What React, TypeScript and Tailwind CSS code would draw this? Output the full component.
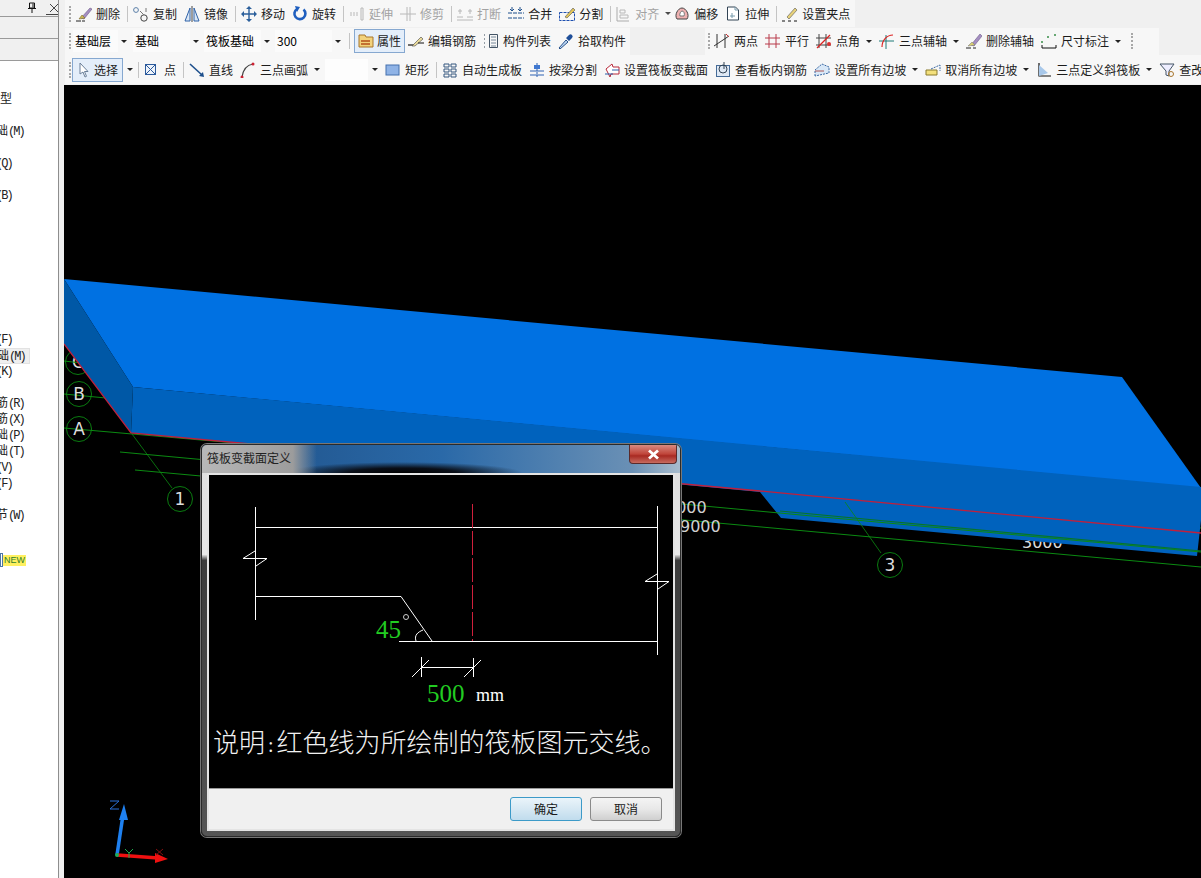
import React from "react";

const S = ({ children }: { children: React.ReactNode }) => (
  <svg width="16" height="16" viewBox="0 0 16 16" fill="none" className="shrink-0 block">{children}</svg>
);
const I: Record<string, React.ReactNode> = {
  del: <S><path d="M0 15h5M6 15h3" stroke="#222" /><path d="M5 12 L14 2 L16 3 L8 13Z" fill="#a58fc2" stroke="#6d5a8a" strokeWidth=".6" /><path d="M3 13 L6 9 L9 12 Z" fill="#c9b65a" stroke="#7c6d2b" strokeWidth=".6" /></S>,
  copy: <S><circle cx="3" cy="4" r="2.4" stroke="#5b7fa8" /><circle cx="11" cy="12" r="3.2" stroke="#444" /><path d="M7 5l4 4M13 2v4" stroke="#777" /></S>,
  mirror: <S><path d="M8 0v16" stroke="#444" /><path d="M6 2L1 15h5Z M10 2l5 13h-5Z" stroke="#2f62a8" fill="#dbe7f5" /></S>,
  move: <S><path d="M8 1v14M1 8h14" stroke="#2b5f9b" strokeWidth="1.4" /><path d="M8 0l3 3H5Z M8 16l3-3H5Z M0 8l3-3v6Z M16 8l-3-3v6Z" fill="#2b5f9b" /></S>,
  rotate: <S><path d="M11.500 3.500a5.500 5.500 0 1 1-6.500-.5" stroke="#1f5fbf" strokeWidth="2.600" /><path d="M3 0l5 1-3 5Z" fill="#1f5fbf" /></S>,
  extend: <S><path d="M1 7h8M1 9h8" stroke="#aaa" strokeDasharray="2 1" /><path d="M12 2h2v12h-2Z" stroke="#aaa" /></S>,
  trim: <S><path d="M0 8h16M7 1v14M10 1v14" stroke="#aaa" /></S>,
  brk: <S><path d="M0 11h6M10 11h6M0 14h16" stroke="#aaa" /><path d="M3 3v5M13 3v5M1 5h4M11 5h4" stroke="#aaa" /></S>,
  merge: <S><path d="M0 7h16M0 12h16" stroke="#1d4f8c" strokeDasharray="4 1" /><path d="M4 1v4M12 1v4M2 3l2 2 2-2M10 3l2 2 2-2" stroke="#1d4f8c" /></S>,
  split: <S><rect x=".5" y="6.500" width="15" height="8" stroke="#1d4fb0" strokeDasharray="3 1" /><path d="M6 11 L14 2 L16 4 L8 12Z" fill="#e2c55a" stroke="#555" strokeWidth=".6" /></S>,
  align: <S><path d="M2 1v14M2 15h12" stroke="#999" /><path d="M5 4h5v3H5Z M5 9h8v3H5Z" stroke="#aaa" /></S>,
  offset: <S><path d="M3 13 C0 9 4 2 8 2 C12 2 16 9 13 13 Z" fill="#eeb1b1" stroke="#444" /><path d="M6 10 C5 8 7 5 8 5 C10 5 11 8 10 10Z" fill="#fff" stroke="#777" /></S>,
  stretch: <S><path d="M2.500 1h8l3 3v10h-11Z" fill="#fff" stroke="#345" /><path d="M10 1v3h3M7 7v5M5 10h5" stroke="#79a" /></S>,
  grip: <S><path d="M0 15h3M6 15h3M12 15h3" stroke="#111" /><path d="M5 11 L13 2 L15 4 L7 13Z" fill="#e8d27a" stroke="#555" strokeWidth=".6" /></S>,
  prop: <S><path d="M1 2h6l1 2h7v10H1Z" fill="#f2d27c" stroke="#a8762c" /><path d="M3 8h9M3 11h9" stroke="#b4501c" strokeWidth="1.500" /></S>,
  rebar: <S><path d="M0 12h7" stroke="#111" strokeWidth="1.200" /><path d="M4 13 L13 4 L15 6 L7 13Z" fill="#eadb9b" stroke="#444" strokeWidth=".6" /><path d="M10 10h6" stroke="#111" /></S>,
  list: <S><path d="M6.500 1.500h8v13h-8Z" stroke="#456" /><path d="M8 4h5M8 7h5M8 10h5M8 13h5" stroke="#789" /><path d="M1 2h2M1 6h2M1 10h2M1 14h2" stroke="#345" strokeDasharray="1 1" /></S>,
  pick: <S><path d="M1 15l7-8 2 2-8 7Z" fill="#bcd6f2" stroke="#27518a" /><path d="M8 5l3-3a2 2 0 0 1 3 3l-3 3Z" fill="#1f4f99" /></S>,
  two: <S><path d="M3 1v14M11 1v14" stroke="#333" /><path d="M0 13L15 3" stroke="#333" /><path d="M12 1l3 3" stroke="#c33" /></S>,
  par: <S><path d="M4 1v14M11 1v14M0 5h15M0 11h15" stroke="#b83a4a" /></S>,
  angle: <S><path d="M3 1v14M10 1v14M0 5h15M0 12h15" stroke="#444" /><path d="M1 15L14 2" stroke="#d22" strokeWidth="1.200" /><circle cx="13" cy="11" r="2" fill="#d33" /></S>,
  arc3: <S><path d="M0 8h15M7 2v14" stroke="#1f7a78" /><path d="M3 14C3 7 8 2 14 2" stroke="#d22" strokeWidth="1.200" /></S>,
  delAxis: <S><path d="M0 15h5M7 15h3" stroke="#222" /><path d="M5 12 L14 1 L16 3 L8 13Z" fill="#a58fc2" stroke="#6d5a8a" strokeWidth=".6" /><path d="M2 13L6 9l3 3Z" fill="#d8ce72" stroke="#777" strokeWidth=".5" /></S>,
  dim: <S><path d="M1 15h14M1 12v3M15 12v3" stroke="#111" /><path d="M1 8v2M7 3v2M14 1v2" stroke="#3a8f4a" strokeWidth="1.500" /></S>,
  sel: <S><path d="M4 1v11l3-2 2 5 1.500-.7L8.500 9.500H12Z" fill="#fff" stroke="#6a7f99" /></S>,
  pt: <S><rect x="1.500" y="2.500" width="10" height="10" stroke="#2b5a9c" fill="#eef3fa" /><path d="M1.500 2.500l10 10M11.500 2.500l-10 10" stroke="#2b5a9c" /></S>,
  line: <S><path d="M1 2L13 13" stroke="#1d4f8c" strokeWidth="1.600" /><path d="M15 15l-5-1 4-4Z" fill="#1d4f8c" /></S>,
  arc: <S><path d="M2 15C3 8 7 3 13 2" stroke="#444" strokeWidth="1.200" /><circle cx="2" cy="15" r="1.500" fill="#c23" /><circle cx="13" cy="2" r="1.500" fill="#c23" /></S>,
  rect: <S><rect x="1" y="3" width="13" height="10" fill="#8fb3e6" stroke="#4470ad" /></S>,
  auto: <S><path d="M2 2h5v3H2Z M9 2h5v3H9Z M2 7h5v3H2Z M9 7h5v3H9Z M2 12h5v3H2Z M9 12h5v3H9Z" stroke="#34567f" /></S>,
  beam: <S><path d="M1 9h14M1 13h14" stroke="#2e63b3" strokeWidth="1.200" /><path d="M8 1v14" stroke="#2e63b3" strokeDasharray="2 1" /><rect x="5" y="3" width="6" height="4" fill="#3f78d0" /></S>,
  section: <S><path d="M2 7l6-5 1 3h6v7H7l-1 3Z" stroke="#b8283a" fill="#fff" /><path d="M1 12h8" stroke="#2a5ea8" /><path d="M8 8h7" stroke="#2a5ea8" /></S>,
  view: <S><rect x="1.500" y="3.500" width="13" height="11" fill="#dfe9f5" stroke="#456b97" /><circle cx="8" cy="7" r="4" stroke="#345" /><path d="M9 0v7" stroke="#345" /></S>,
  slope: <S><path d="M1 14V8L8 2l7 3v6Z" fill="#d9e8f7" stroke="#3a69a4" strokeDasharray="2 1" /><path d="M1 9h9" stroke="#a55" /></S>,
  noslope: <S><path d="M1 8h11v5H1Z" fill="#f3e07c" stroke="#8a7a2c" /><path d="M6 7l9-4v6" stroke="#3a69a4" strokeDasharray="2 1" /></S>,
  plane: <S><path d="M3 1v13h12" stroke="#111" strokeWidth="1.200" /><path d="M3 3l9 8-9 3Z" fill="#a8c8ea" /></S>,
  check: <S><path d="M1 2h14l-5 7v5l-3-1V9Z" stroke="#456" fill="#eef" /><circle cx="12" cy="12" r="2.500" stroke="#a8752c" /></S>,
};

const Tri = () => <span className="block border-x-[3px] border-t-[3px] border-x-transparent border-t-[#222]" />;
const Caret = ({ c = "ml-[1px]" }: { c?: string }) => <span className={`${c} w-[7px] flex justify-center shrink-0`}><Tri /></span>;
const Sep = ({ c = "" }: { c?: string }) => <span className={`block w-px h-[16px] bg-[#c4c4c4] shrink-0 -mr-[2px] ${c}`} />;
const Grip = ({ c = "" }: { c?: string }) => <span className={`block h-[16px] border-l-2 border-dotted border-[#a8a8a8] shrink-0 ${c}`} />;

function Tool({ i, t, off, caret, c = "" }: { i: string; t: string; off?: boolean; caret?: boolean; c?: string }) {
  return (
    <div className={`flex items-center shrink-0 gap-[4px] ${off ? "text-[#8e8e8e] opacity-80" : "text-[#1c1c1c]"} ${c}`}>
      {I[i]}
      <span className="whitespace-nowrap">{t}</span>
      {caret && <Caret />}
    </div>
  );
}

function Combo({ t, w }: { t: string; w: string }) {
  return (
    <div className="flex items-center h-[22px] shrink-0">
      <div className={`h-full bg-[#fbfbfb] pl-[2px] flex items-center ${w}`}>{t}</div>
      <div className="w-[12px] h-full flex justify-center items-center"><Tri /></div>
    </div>
  );
}

const list: [string, string, string][] = [
  ["", "型", "ml-0"], ["", "", ""], ["础", "(M)", "-ml-[4px]"], ["", "", ""], ["", "(Q)", "-ml-[4px]"], ["", "", ""], ["", "(B)", "-ml-[4px]"],
  ["", "", ""], ["", "", ""], ["", "", ""], ["", "", ""], ["", "", ""], ["", "", ""], ["", "", ""], ["", "", ""],
  ["", "(F)", "-ml-[4px]"], ["础", "(M)", "-ml-[4px]"], ["", "(K)", "-ml-[4px]"], ["", "", ""], ["筋", "(R)", "-ml-[4px]"], ["筋", "(X)", "-ml-[4px]"],
  ["础", "(P)", "-ml-[4px]"], ["础", "(T)", "-ml-[4px]"], ["", "(V)", "-ml-[4px]"], ["", "(F)", "-ml-[4px]"], ["", "", ""], ["节", "(W)", "-ml-[4px]"],
];

function Sidebar() {
  return (
    <aside className="w-[59px] shrink-0 bg-white border-r border-[#8e8e8e] flex flex-col overflow-hidden">
      <div className="h-[17px] bg-[#f0f0f0] border-b border-[#9a9a9a] flex items-center pl-[27px] gap-[9px]">
        <svg width="10" height="12" viewBox="0 0 10 12" fill="none" className="block shrink-0"><path d="M2.500 1h5v5h-5ZM1 6.500h8M5 7v4M6 1.500v4" stroke="#111" /></svg>
        <svg width="14" height="13" viewBox="0 0 14 13" fill="none" className="block shrink-0"><path d="M4 2l8 8M12 2l-8 8M0 12.500h14" stroke="#444" /></svg>
      </div>
      <div className="h-[22px] bg-[#f0f0f0] border-b border-[#9a9a9a]" />
      <div className="h-[22px] bg-[#f0f0f0] border-b border-[#9a9a9a]" />
      <div className="pt-[31px] flex flex-col text-[12px] font-['Liberation_Mono','Noto_Sans_CJK_SC',monospace] text-[#222]">
        {list.map(([cjk, lat, m], k) => (
          <div key={k} className={`h-[16px] leading-[16px] whitespace-nowrap ${k === 16 ? "bg-[#efefef] border border-[#e2e2e2] w-[34px]" : ""} ${m}`}>
            {cjk}<span className={lat === "型" ? "" : "tracking-[-2px]"}>{lat}</span>
          </div>
        ))}
        <div className="h-[29px]" />
        <div className="flex items-center h-[14px]">
          <span className="block w-[3px] h-[14px] border border-[#4d78a8]" />
          <span className="bg-[#fff060] text-[#2d7f2d] text-[9px] leading-[11px] font-['Liberation_Sans',sans-serif] px-px">NEW</span>
        </div>
      </div>
    </aside>
  );
}

function Toolbar() {
  return (
    <div className="h-[85px] shrink-0 bg-[#f0f0f0] pl-[1px] flex flex-col text-[12px] font-['Noto_Sans_CJK_SC','Liberation_Sans',sans-serif] overflow-hidden">
      <div className="h-[27px] flex items-center">
        <div className="h-[27px] w-[790px] bg-[#f7f7f7] flex items-center pl-[4px] gap-[7px]">
          <Grip />
          <Tool i="del" t="删除" c="-ml-[2px]" /><Sep />
          <Tool i="copy" t="复制" /><Tool i="mirror" t="镜像" /><Sep />
          <Tool i="move" t="移动" /><Tool i="rotate" t="旋转" /><Sep />
          <Tool i="extend" t="延伸" off /><Tool i="trim" t="修剪" off /><Sep />
          <Tool i="brk" t="打断" off /><Tool i="merge" t="合并" /><Tool i="split" t="分割" /><Sep />
          <Tool i="align" t="对齐" off caret c="-ml-[1px] -mr-[4px]" />
          <Tool i="offset" t="偏移" /><Tool i="stretch" t="拉伸" /><Sep />
          <Tool i="grip" t="设置夹点" />
        </div>
      </div>
      <div className="h-[28px] flex items-center">
        <div className="h-[27px] w-[565px] bg-[#f7f7f7] flex items-center pl-[4px] shrink-0">
          <Grip c="mr-[2px]" />
          <Combo t="基础层" w="w-[45px]" />
          <span className="w-[3px]" />
          <Combo t="基础" w="w-[57px]" />
          <span className="w-[2px]" />
          <Combo t="筏板基础" w="w-[57px]" />
          <span className="w-[2px]" />
          <Combo t="300" w="w-[57px]" />
          <Sep c="ml-[5px] mr-[4px]" />
          <div className="w-[51px] h-[24px] border border-[#86a8d0] bg-[#e4eefa] flex items-center pl-[3px] gap-[3px] shrink-0 text-[#1c1c1c]">{I.prop}<span>属性</span></div>
          <Tool i="rebar" t="编辑钢筋" c="ml-[3px]" />
          <Tool i="list" t="构件列表" c="ml-[7px]" />
          <Tool i="pick" t="拾取构件" c="ml-[7px]" />
        </div>
        <div className="h-[27px] w-[454px] ml-[75px] bg-[#f7f7f7] flex items-center pl-[3px] gap-[7px] shrink-0">
          <Grip />
          <Tool i="two" t="两点" c="-ml-[3px]" /><Tool i="par" t="平行" /><Tool i="angle" t="点角" caret />
          <Tool i="arc3" t="三点辅轴" caret /><Tool i="delAxis" t="删除辅轴" /><Tool i="dim" t="尺寸标注" caret />
          <Grip c="ml-[3px]" />
        </div>
      </div>
      <div className="h-[29px] bg-[#f7f7f7] flex items-center pl-[4px] ml-0">
        <Grip c="mr-px" />
        <div className="w-[51px] h-[24px] border border-[#86a8d0] bg-[#e4eefa] flex items-center pl-[3px] shrink-0 text-[#1c1c1c]">{I.sel}<span className="ml-[2px]">选择</span></div>
        <Caret c="ml-[3px]" />
        <Sep c="ml-[5px] mr-[5px]" />
        <div className="flex items-center gap-[7px]">
          <Tool i="pt" t="点" /><Sep />
          <Tool i="line" t="直线" /><Tool i="arc" t="三点画弧" caret />
          <div className="flex items-center -ml-[2px] h-[22px]"><div className="w-[43px] h-full bg-[#fdfdfd]" /><Caret c="ml-[3px]" /></div>
          <Tool i="rect" t="矩形" /><Sep />
          <Tool i="auto" t="自动生成板" /><Tool i="beam" t="按梁分割" /><Tool i="section" t="设置筏板变截面" />
          <Tool i="view" t="查看板内钢筋" /><Tool i="slope" t="设置所有边坡" caret /><Tool i="noslope" t="取消所有边坡" caret />
          <Tool i="plane" t="三点定义斜筏板" caret /><Tool i="check" t="查改标高" />
        </div>
      </div>
    </div>
  );
}

const G = "#0b8a12";
function Scene() {
  const node = (x: number, y: number, t: string) => (
    <g key={t}>
      <circle cx={x} cy={y} r="12.500" stroke={G} strokeWidth=".9" fill="none" />
      <text x={x} y={y + 6} textAnchor="middle" fontSize="17" fill="#ddd" fontFamily="DejaVu Sans, sans-serif">{t}</text>
    </g>
  );
  return (
    <svg viewBox="64 85 1137 793" className="absolute inset-0 w-full h-full">
      {node(78, 362, "C")}
      <path d="M64 361 L90 364 M64 394 L106 398 M64 428 L1201 528" stroke={G} />
      {node(79, 394, "B")}{node(79, 429, "A")}
      <text x="1022" y="548" fontSize="16" fill="#ddd" fontFamily="DejaVu Sans, sans-serif">3000</text>
      <polygon points="64,279 1122,377 1201,488 133,387" fill="#0071e2" />
      <polygon points="133,387 1201,487 1201,520 1197,556 781,518 760,492 131,433" fill="#0062bd" />
      <polygon points="64,279 133,387 131,433 64,344" fill="#0058a6" />
      <path d="M64 344 L131 433 L760 491 L1201 533" stroke="#c0203c" strokeWidth="1.300" fill="none" />
      <path d="M132 434 L172 488 M845 502 L881 553" stroke={G} strokeWidth=".8" />
      <path d="M120 452 L1201 552 M135 470 L1201 567" stroke={G} />
      <path d="M780 511 L1201 551" stroke="#06752a" strokeWidth="1.200" />
      {node(180, 499, "1")}{node(890, 565, "3")}
      <text x="666" y="513" fontSize="16" fill="#d0d0d0" fontFamily="DejaVu Sans, sans-serif">9000</text>
      <text x="680" y="532" fontSize="16" fill="#d0d0d0" fontFamily="DejaVu Sans, sans-serif">9000</text>
      <path d="M117 855 L123 815" stroke="#1e80f0" strokeWidth="3.500" />
      <path d="M124 804 L119 820 L128 820 Z" fill="#1e80f0" />
      <path d="M117 855 L158 858" stroke="#f01010" strokeWidth="3.500" />
      <path d="M168 859 L155 853 L155 863 Z" fill="#f01010" />
      <circle cx="117" cy="855" r="2" fill="#1bb05a" />
      <path d="M110 801h9l-9 8h9" stroke="#2a70d8" fill="none" />
      <path d="M125 849l4 4 4-4M129 853v5" stroke="#1fa84a" fill="none" />
      <path d="M156 849l7 6M163 849l-7 6" stroke="#801010" fill="none" />
    </svg>
  );
}

function Drawing() {
  const w = "#fff";
  return (
    <svg viewBox="209 475 464 250" className="block w-[464px] h-[250px] shrink-0">
      <g stroke={w} fill="none">
        <path d="M255.500 507V620M255 527.500H657M255 596.500H401L432 641M399 641.500H657M657.500 506V655" />
        <path d="M255 551L243 558.500H267L256 566M657 574L645 581.500H669L658 589" />
        <path d="M416 641C414 635 418 632 423 630" />
        <path d="M421.500 657V677M473.500 658V677M421 667.500H473M412 677L429 660M464 677L481 660" />
        <circle cx="406" cy="617" r="2.500" stroke="#ccc" />
      </g>
      <path d="M472.500 504V641" stroke="#d0203c" strokeDasharray="24 3" />
      <text x="376" y="638" fontSize="25" fill="#22cc22" fontFamily="Liberation Serif, serif">45</text>
      <text x="427" y="702" fontSize="25" fill="#22cc22" fontFamily="Liberation Serif, serif">500</text>
      <text x="476" y="701" fontSize="18" fill="#fff" fontFamily="Liberation Serif, serif">mm</text>
    </svg>
  );
}

function Dialog() {
  return (
    <div className="absolute left-[137px] top-[359px] w-[480px] h-[393px] rounded-[6px] border border-[#2a2a2a] shadow-[0_0_0_1px_#777] bg-[linear-gradient(180deg,#dcdcdc_0%,#e8e8e8_28%,#3c3c3c_29.500%,#555_100%)] flex flex-col overflow-hidden font-['Noto_Sans_CJK_SC','Liberation_Sans',sans-serif]">
      <div className="h-[28px] shrink-0 relative flex items-center pl-[5px] text-[12px] text-[#222] bg-[linear-gradient(90deg,#b8b8b8_0%,#9c9c9c_19%,transparent_24%),radial-gradient(ellipse_120px_11px_at_42%_100%,#000_0%,#0a0f18_45%,transparent_100%),linear-gradient(90deg,#1e4f85_0%,#2a69a8_50%,#6a90b5_90%,#a8bccd_100%)]">
        <span className="-mt-[2px]">筏板变截面定义</span>
        <div className="absolute right-[3px] top-0 w-[48px] h-[19px] rounded-b-[4px] border border-[#5a2a2a] border-t-0 bg-[linear-gradient(180deg,#d88a80_0%,#c0453a_50%,#a82a22_60%,#c86c60_100%)] flex items-center justify-center">
          <svg width="13" height="11" viewBox="0 0 13 11"><path d="M2 1.500 L11 9.500 M11 1.500 L2 9.500" stroke="#fff" strokeWidth="2.800" /></svg>
        </div>
      </div>
      <div className="mx-[5px] mb-[5px] flex-1 border-2 border-[#e4e4e4] flex flex-col bg-[#f0f0f0] min-h-0">
        <div className="h-[314px] bg-black border-b border-[#999] flex flex-col shrink-0">
          <Drawing />
          <div className="pl-[4px] h-[36px] leading-[32px] text-[26px] font-light text-[#f2f2f2] whitespace-nowrap">说明<span className="text-[20px] font-['Liberation_Serif',serif] mx-[3px]">:</span>红色线为所绘制的筏板图元交线。</div>
        </div>
        <div className="flex-1 flex items-center justify-end gap-[8px] pr-[11px] text-[12px] text-[#1a1a1a]">
          <button className="w-[72px] h-[24px] rounded-[3px] border border-[#3c9ac8] bg-[linear-gradient(180deg,#eaf4fa_0%,#d6e8f3_50%,#c0dced_100%)]">确定</button>
          <button className="w-[72px] h-[24px] rounded-[3px] border border-[#8a8a8a] bg-[linear-gradient(180deg,#f4f4f4_0%,#e8e8e8_50%,#cfcfcf_100%)]">取消</button>
        </div>
      </div>
    </div>
  );
}

export default function App() {
  return (
    <div className="w-[1201px] h-[878px] flex overflow-hidden bg-[#f0f0f0]">
      <Sidebar />
      <div className="w-[5px] shrink-0 bg-[#f0f0f0]" />
      <main className="flex-1 min-w-0 flex flex-col">
        <Toolbar />
        <div className="flex-1 relative bg-black overflow-hidden">
          <Scene />
          <Dialog />
        </div>
      </main>
    </div>
  );
}
